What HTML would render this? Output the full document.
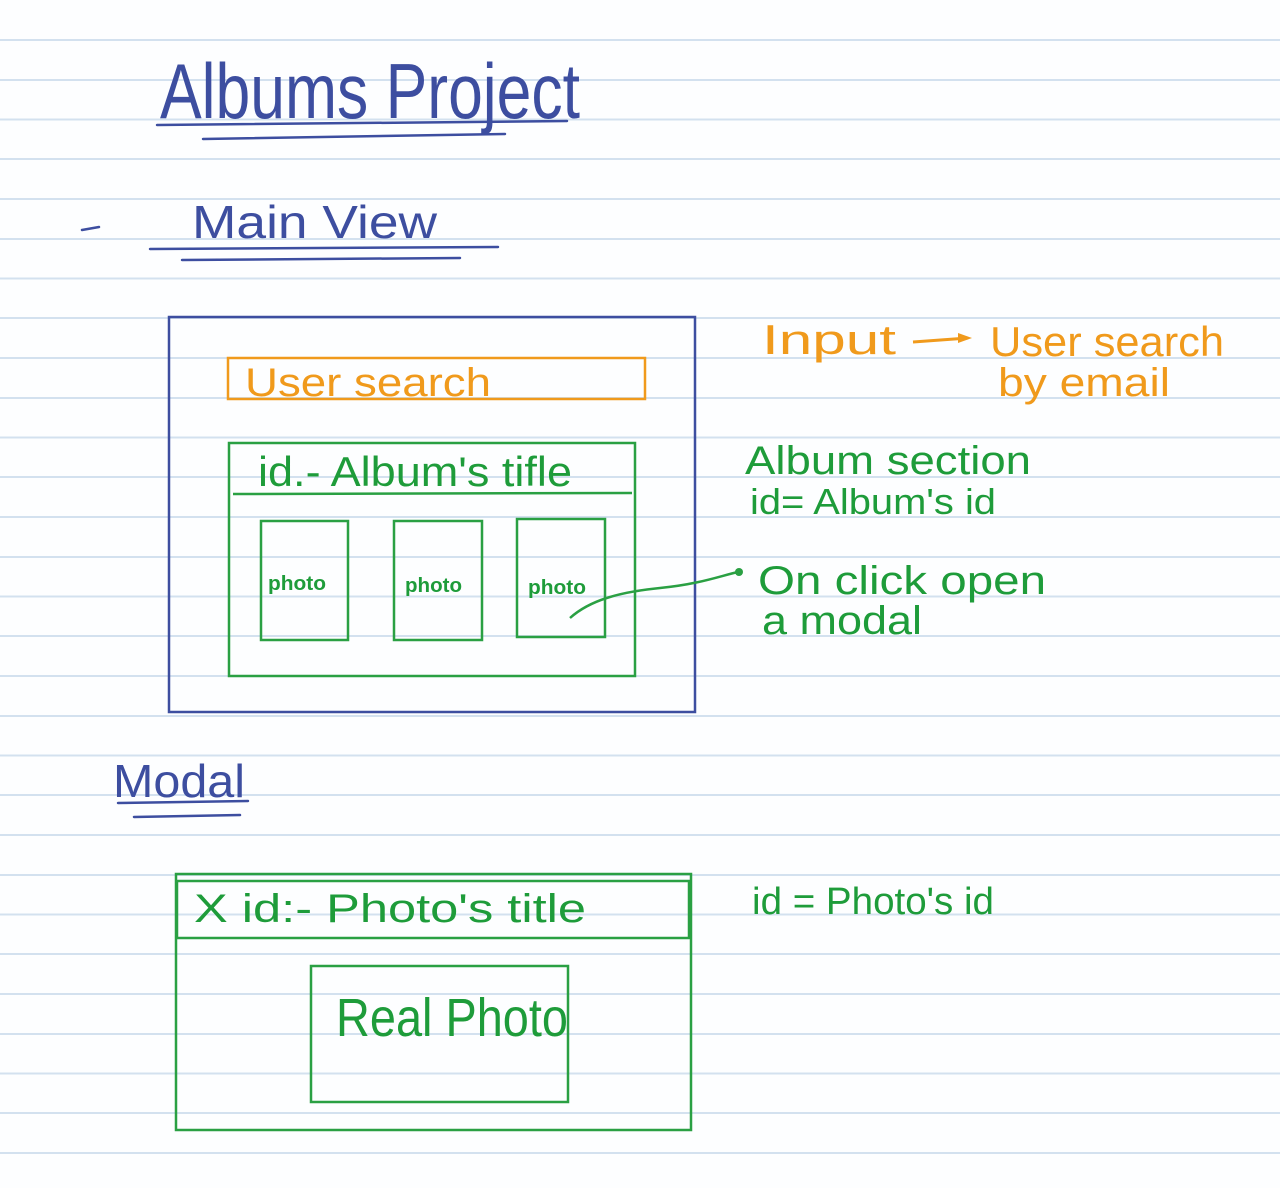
<!DOCTYPE html>
<html><head><meta charset="utf-8"><style>
html,body{margin:0;padding:0;background:#fff;}
svg{display:block;}
text{font-family:"Liberation Sans",sans-serif;}
</style></head><body>
<svg width="1280" height="1188" viewBox="0 0 1280 1188" xmlns="http://www.w3.org/2000/svg">
<rect width="1280" height="1188" fill="#fdfeff"/>
<g stroke="#d3e1ef" stroke-width="2">
<line x1="0" x2="1280" y1="40" y2="40"/><line x1="0" x2="1280" y1="80" y2="80"/><line x1="0" x2="1280" y1="119.5" y2="119.5"/><line x1="0" x2="1280" y1="159" y2="159"/><line x1="0" x2="1280" y1="199" y2="199"/><line x1="0" x2="1280" y1="239" y2="239"/><line x1="0" x2="1280" y1="278.5" y2="278.5"/><line x1="0" x2="1280" y1="318" y2="318"/><line x1="0" x2="1280" y1="358" y2="358"/><line x1="0" x2="1280" y1="398" y2="398"/><line x1="0" x2="1280" y1="437.5" y2="437.5"/><line x1="0" x2="1280" y1="477" y2="477"/><line x1="0" x2="1280" y1="517" y2="517"/><line x1="0" x2="1280" y1="557" y2="557"/><line x1="0" x2="1280" y1="596.5" y2="596.5"/><line x1="0" x2="1280" y1="636" y2="636"/><line x1="0" x2="1280" y1="676" y2="676"/><line x1="0" x2="1280" y1="716" y2="716"/><line x1="0" x2="1280" y1="755.5" y2="755.5"/><line x1="0" x2="1280" y1="795" y2="795"/><line x1="0" x2="1280" y1="835" y2="835"/><line x1="0" x2="1280" y1="875" y2="875"/><line x1="0" x2="1280" y1="914.5" y2="914.5"/><line x1="0" x2="1280" y1="954" y2="954"/><line x1="0" x2="1280" y1="994" y2="994"/><line x1="0" x2="1280" y1="1034" y2="1034"/><line x1="0" x2="1280" y1="1073.5" y2="1073.5"/><line x1="0" x2="1280" y1="1113" y2="1113"/><line x1="0" x2="1280" y1="1153" y2="1153"/>
</g>
<g fill="#3d4ea0" stroke="none">
<text x="160" y="118" font-size="78" textLength="420" lengthAdjust="spacingAndGlyphs">Albums Project</text>
<text x="192" y="238" font-size="46" textLength="245" lengthAdjust="spacingAndGlyphs">Main View</text>
<text x="113" y="797" font-size="46" textLength="132" lengthAdjust="spacingAndGlyphs">Modal</text>
</g>
<g stroke="#3d4ea0" stroke-width="2.5" fill="none" stroke-linecap="round">
<path d="M157 125 L567 121"/><path d="M203 139 L505 134"/>
<path d="M82 230 L99 227"/>
<path d="M150 249 L498 247"/><path d="M182 260 L460 258"/>
<path d="M118 803 L248 801"/><path d="M134 817 L240 815"/>
<rect x="169" y="317" width="526" height="395"/>
</g>
<rect x="228" y="358" width="417" height="41" fill="none" stroke="#f09a1c" stroke-width="2.5"/>
<g fill="#f09a1c">
<text x="245" y="396" font-size="40" textLength="246" lengthAdjust="spacingAndGlyphs">User search</text>
<text x="762" y="354" font-size="42" textLength="134" lengthAdjust="spacingAndGlyphs">Input</text>
<text x="990" y="356" font-size="42" textLength="234" lengthAdjust="spacingAndGlyphs">User search</text>
<text x="998" y="396" font-size="40" textLength="172" lengthAdjust="spacingAndGlyphs">by email</text>
</g>
<path d="M913 342 L968 338" stroke="#f09a1c" stroke-width="3" fill="none"/>
<path d="M958 333 L972 338 L958 343Z" fill="#f09a1c"/>
<g stroke="#2aa043" stroke-width="2.5" fill="none">
<rect x="229" y="443" width="406" height="233"/>
<path d="M233 494 L632 493"/>
<rect x="261" y="521" width="87" height="119"/>
<rect x="394" y="521" width="88" height="119"/>
<rect x="517" y="519" width="88" height="118"/>
<path d="M570 618 C590 600 620 592 660 588 C700 584 720 576 738 572"/>
<rect x="176" y="874" width="515" height="256"/>
<rect x="177" y="881" width="512" height="57"/>
<rect x="311" y="966" width="257" height="136"/>
</g>
<circle cx="739" cy="572" r="4" fill="#2aa043"/>
<g fill="#1e9c3a">
<text x="258" y="486" font-size="42" textLength="314" lengthAdjust="spacingAndGlyphs">id.- Album's tifle</text>
<text x="268" y="590" font-size="20" font-weight="bold" textLength="58" lengthAdjust="spacingAndGlyphs">photo</text>
<text x="405" y="592" font-size="20" font-weight="bold" textLength="57" lengthAdjust="spacingAndGlyphs">photo</text>
<text x="528" y="594" font-size="20" font-weight="bold" textLength="58" lengthAdjust="spacingAndGlyphs">photo</text>
<text x="745" y="474" font-size="40" textLength="286" lengthAdjust="spacingAndGlyphs">Album section</text>
<text x="750" y="514" font-size="36" textLength="246" lengthAdjust="spacingAndGlyphs">id= Album's id</text>
<text x="758" y="594" font-size="40" textLength="288" lengthAdjust="spacingAndGlyphs">On click open</text>
<text x="762" y="634" font-size="40" textLength="160" lengthAdjust="spacingAndGlyphs">a modal</text>
<text x="194" y="922" font-size="40" textLength="392" lengthAdjust="spacingAndGlyphs">X id:- Photo's title</text>
<text x="336" y="1036" font-size="54" textLength="232" lengthAdjust="spacingAndGlyphs">Real Photo</text>
<text x="752" y="914" font-size="38" textLength="242" lengthAdjust="spacingAndGlyphs">id = Photo's id</text>
</g>
</svg>
</body></html>
